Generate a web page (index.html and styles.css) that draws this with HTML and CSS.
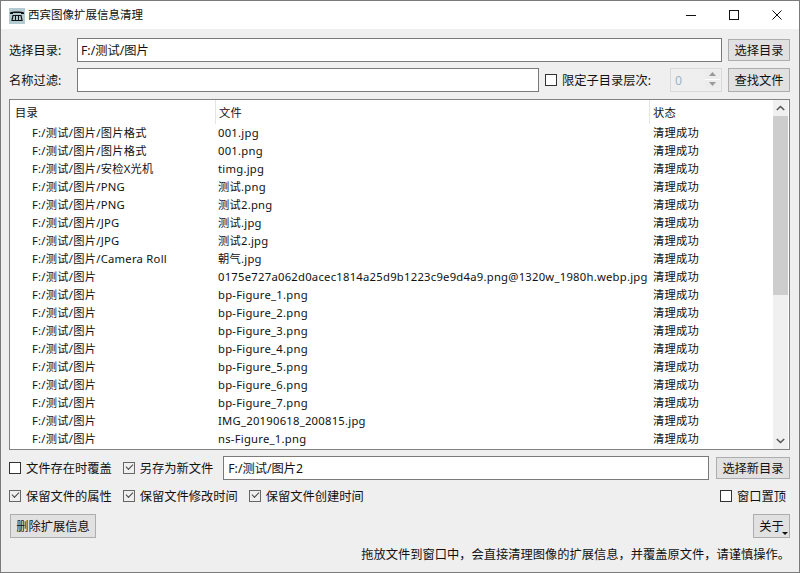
FILE: index.html
```html
<!DOCTYPE html>
<html lang="zh">
<head>
<meta charset="utf-8">
<title>西宾图像扩展信息清理</title>
<link rel="stylesheet" href="styles.css">
</head>
<body>
<div class="window">
  <header class="titlebar">
    <div class="app-icon"><svg width="16" height="16" viewBox="0 0 16 16"><rect width="16" height="16" fill="#b5cbd2"/><path d="M1 4.500c2-1.200 12-1.200 14 0v1.400h-3V5H4v.9H1z" fill="#111"/><path d="M4 7.500h8l1 5H3z" fill="none" stroke="#111" stroke-width="1.200"/><path d="M6.500 7.500v5M9.500 7.500v5" stroke="#111"/></svg></div>
    <span class="title">西宾图像扩展信息清理</span>
    <div class="controls">
      <span class="ctl"><svg width="11" height="11" viewBox="0 0 11 11"><path d="M0 5.500h10" stroke="#111"/></svg></span>
      <span class="ctl"><svg width="11" height="11" viewBox="0 0 11 11"><rect x=".5" y=".5" width="9" height="9" fill="none" stroke="#111"/></svg></span>
      <span class="ctl"><svg width="11" height="11" viewBox="0 0 11 11"><path d="M.5 .5l9 9M9.500 .5l-9 9" stroke="#111"/></svg></span>
    </div>
  </header>
  <main class="content">
    <div class="row row-dir">
      <label class="lbl">选择目录:</label>
      <div class="input grow">F:/测试/图片</div>
      <button class="btn btn-r">选择目录</button>
    </div>
    <div class="row row-filter">
      <label class="lbl">名称过滤:</label>
      <div class="input filter"></div>
      <span class="check"><i class="box"></i>限定子目录层次:</span>
      <div class="spin">
        <span class="spin-val">0</span>
        <span class="spin-btns">
          <span class="arrow"><svg width="7" height="4" viewBox="0 0 7 4"><path d="M0 4l3.500-4L7 4z" fill="#9a9a9a"/></svg></span>
          <span class="arrow"><svg width="7" height="4" viewBox="0 0 7 4"><path d="M0 0l3.500 4L7 0z" fill="#9a9a9a"/></svg></span>
        </span>
      </div>
      <button class="btn btn-r hot">查找文件</button>
    </div>
    <section class="table">
      <div class="table-body">
        <div class="thead">
          <div class="th c1">目录</div><div class="th c2">文件</div><div class="th c3">状态</div>
        </div>
        <div class="tr"><span class="c1">F:/测试/图片/图片格式</span><span class="c2">001.jpg</span><span class="c3">清理成功</span></div>
        <div class="tr"><span class="c1">F:/测试/图片/图片格式</span><span class="c2">001.png</span><span class="c3">清理成功</span></div>
        <div class="tr"><span class="c1">F:/测试/图片/安检X光机</span><span class="c2">timg.jpg</span><span class="c3">清理成功</span></div>
        <div class="tr"><span class="c1">F:/测试/图片/PNG</span><span class="c2">测试.png</span><span class="c3">清理成功</span></div>
        <div class="tr"><span class="c1">F:/测试/图片/PNG</span><span class="c2">测试2.png</span><span class="c3">清理成功</span></div>
        <div class="tr"><span class="c1">F:/测试/图片/JPG</span><span class="c2">测试.jpg</span><span class="c3">清理成功</span></div>
        <div class="tr"><span class="c1">F:/测试/图片/JPG</span><span class="c2">测试2.jpg</span><span class="c3">清理成功</span></div>
        <div class="tr"><span class="c1">F:/测试/图片/Camera Roll</span><span class="c2">朝气.jpg</span><span class="c3">清理成功</span></div>
        <div class="tr"><span class="c1">F:/测试/图片</span><span class="c2">0175e727a062d0acec1814a25d9b1223c9e9d4a9.png@1320w_1980h.webp.jpg</span><span class="c3">清理成功</span></div>
        <div class="tr"><span class="c1">F:/测试/图片</span><span class="c2">bp-Figure_1.png</span><span class="c3">清理成功</span></div>
        <div class="tr"><span class="c1">F:/测试/图片</span><span class="c2">bp-Figure_2.png</span><span class="c3">清理成功</span></div>
        <div class="tr"><span class="c1">F:/测试/图片</span><span class="c2">bp-Figure_3.png</span><span class="c3">清理成功</span></div>
        <div class="tr"><span class="c1">F:/测试/图片</span><span class="c2">bp-Figure_4.png</span><span class="c3">清理成功</span></div>
        <div class="tr"><span class="c1">F:/测试/图片</span><span class="c2">bp-Figure_5.png</span><span class="c3">清理成功</span></div>
        <div class="tr"><span class="c1">F:/测试/图片</span><span class="c2">bp-Figure_6.png</span><span class="c3">清理成功</span></div>
        <div class="tr"><span class="c1">F:/测试/图片</span><span class="c2">bp-Figure_7.png</span><span class="c3">清理成功</span></div>
        <div class="tr"><span class="c1">F:/测试/图片</span><span class="c2">IMG_20190618_200815.jpg</span><span class="c3">清理成功</span></div>
        <div class="tr"><span class="c1">F:/测试/图片</span><span class="c2">ns-Figure_1.png</span><span class="c3">清理成功</span></div>
      </div>
      <div class="scrollbar">
        <span class="sb-arrow"><svg width="9" height="6" viewBox="0 0 9 6"><path d="M.8 5L4.500 1.500 8.200 5" fill="none" stroke="#555" stroke-width="1.600"/></svg></span>
        <div class="sb-track"><div class="sb-thumb"></div></div>
        <span class="sb-arrow"><svg width="9" height="6" viewBox="0 0 9 6"><path d="M.8 1L4.500 4.500 8.200 1" fill="none" stroke="#555" stroke-width="1.600"/></svg></span>
      </div>
    </section>
    <div class="row row-save">
      <span class="check"><i class="box"></i>文件存在时覆盖</span>
      <span class="check"><i class="box on"></i>另存为新文件</span>
      <div class="input grow newdir">F:/测试/图片2</div>
      <button class="btn btn-new">选择新目录</button>
    </div>
    <div class="row row-keep">
      <span class="check"><i class="box on"></i>保留文件的属性</span>
      <span class="check"><i class="box on"></i>保留文件修改时间</span>
      <span class="check"><i class="box on"></i>保留文件创建时间</span>
      <span class="check topmost"><i class="box"></i>窗口置顶</span>
    </div>
    <div class="row row-actions">
      <button class="btn btn-del">删除扩展信息</button>
      <button class="btn btn-about">关于<span class="caret"></span></button>
    </div>
    <p class="hint">拖放文件到窗口中，会直接清理图像的扩展信息，并覆盖原文件，请谨慎操作。</p>
  </main>
</div>
</body>
</html>
```
FILE: styles.css
```css
* { box-sizing: border-box; }
html, body { margin: 0; padding: 0; }
body { width: 800px; height: 573px; overflow: hidden; font: 12.25px/18px "Noto Sans", "Noto Sans CJK SC", sans-serif; color: #111; }
.window { width: 800px; height: 573px; border: 1px solid #7b7b7b; background: #efefef; display: flex; flex-direction: column; }
.titlebar { height: 28px; flex: none; background: #fff; display: flex; align-items: center; padding-left: 8px; }
.app-icon { width: 16px; height: 16px; margin-top: 1px; display: flex; }
.title { margin-left: 3px; font-size: 11.5px; }
.controls { margin-left: auto; display: flex; }
.ctl { width: 43px; height: 28px; display: flex; align-items: center; justify-content: center; }
.content { flex: 1; display: flex; flex-direction: column; padding: 9px 9px 0 8px; min-height: 0; }
.row { display: flex; align-items: center; flex: none; }
.row-dir { height: 24px; }
.row-filter { height: 24px; margin-top: 6px; }
.lbl { width: 68px; flex: none; padding-top: 2px; }
.input { height: 24px; border: 1px solid #7a7a7a; background: #fff; padding: 1px 3px 0; line-height: 22px; }
.grow { flex: 1; }
.filter { width: 462px; flex: none; }
.btn { font: inherit; color: #111; border: 1px solid #adadad; background: #e1e1e1; height: 22px; padding: 1px 0 0; flex: none; }
.btn-r { width: 62px; margin-left: 6px; }
.hot { height: 24px; }
.check { display: inline-flex; align-items: center; flex: none; white-space: nowrap; padding-top: 2px; }
.box { width: 12px; height: 12px; border: 1px solid #333; background: #fff; margin: -2px 5px 0 0; position: relative; }
.box.on { border-color: #666; background: #efefef; }
.box.on::after { content: ""; position: absolute; left: 2px; top: 1px; width: 6px; height: 3px; border-left: 1px solid #444; border-bottom: 1px solid #444; transform: rotate(-45deg); }
.row-filter .check { margin-left: 6px; }
.spin { width: 52px; height: 24px; margin-left: auto; border: 1px solid #d9d9d9; background: #efefef; display: flex; flex: none; }
.spin-val { flex: 1; padding: 1px 0 0 4px; line-height: 22px; color: #9db4c8; }
.spin-btns { width: 15px; display: flex; flex-direction: column; gap: 1px; background: #fff; margin: 1px 1px 3px 0; }
.arrow { flex: 1; background: #ececec; display: flex; align-items: center; justify-content: center; }
.table { height: 351px; margin-top: 7px; flex: none; border: 1px solid #828282; background: #fff; display: flex; overflow: hidden; font-size: 11.25px; letter-spacing: .25px; }
.table-body { flex: 1; min-width: 0; overflow: hidden; }
.thead { display: flex; height: 24px; }
.th { line-height: 26px; border-left: 1px solid #e4e4e4; padding-left: 3px; height: 24px; }
.th.c1 { border-left: 0; padding-left: 5px; width: 205px; }
.th.c2 { width: 434px; }
.tr { display: flex; height: 18px; line-height: 18px; white-space: nowrap; }
.tr .c1 { width: 205px; padding-left: 22px; }
.tr .c2 { width: 435px; padding-left: 3px; }
.tr .c3 { padding-left: 3px; }
.scrollbar { width: 15px; flex: none; margin-right: 1px; background: #f0f0f0; display: flex; flex-direction: column; }
.sb-arrow { height: 16px; display: flex; align-items: center; justify-content: center; flex: none; }
.sb-track { flex: 1; }
.sb-thumb { height: 179px; background: #cdcdcd; }
.row-save { height: 24px; margin-top: 6px; }
.row-save .check:nth-child(2) { margin-left: 11px; }
.newdir { margin-left: 10px; padding-left: 4px; }
.btn-new { width: 74px; margin-left: 7px; }
.row-keep { height: 18px; margin-top: 7px; padding-right: 4px; }
.row-keep .check:nth-child(n+2) { margin-left: 11px; }
.topmost { margin-left: auto !important; }
.row-actions { height: 24px; margin-top: 9px; justify-content: space-between; padding-left: 1px; }
.btn-del { width: 86px; height: 24px; }
.btn-about { width: 37px; height: 24px; position: relative; }
.caret { position: absolute; right: 1px; bottom: 2px; border: 3px solid transparent; border-top: 3px solid #111; border-bottom: 0; width: 0; height: 0; }
.hint { margin: 8px 0 0; text-align: right; }
```
